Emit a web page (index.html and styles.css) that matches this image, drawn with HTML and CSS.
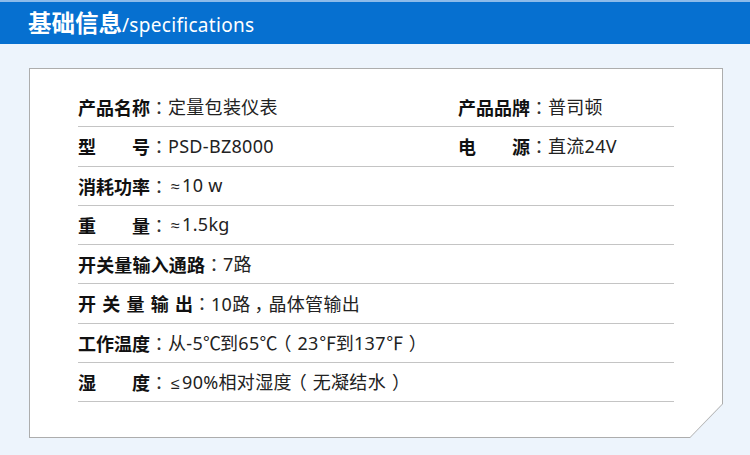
FILE: index.html
```html
<!DOCTYPE html>
<html lang="zh">
<head>
<meta charset="utf-8">
<link rel="stylesheet" href="styles.css">
</head>
<body>
<header class="banner">
  <h1 class="title"><span class="title-cn">基础信息</span><span class="title-en">/specifications</span></h1>
</header>
<main class="stage">
  <section class="card">
    <div class="card-inner">
      <div class="row">
        <div class="cell cell-left"><span class="label w4">产品名称</span><span class="colon">：</span><span class="value">定量包装仪表</span></div>
        <div class="cell"><span class="label w4">产品品牌</span><span class="colon">：</span><span class="value">普司顿</span></div>
      </div>
      <div class="row">
        <div class="cell cell-left"><span class="label w4">型号</span><span class="colon">：</span><span class="value">PSD-BZ8000</span></div>
        <div class="cell"><span class="label w4">电源</span><span class="colon">：</span><span class="value">直流24V</span></div>
      </div>
      <div class="row">
        <div class="cell"><span class="label w4">消耗功率</span><span class="colon">：</span><span class="value"><span class="sym">≈</span>10 w</span></div>
      </div>
      <div class="row">
        <div class="cell"><span class="label w4">重量</span><span class="colon">：</span><span class="value"><span class="sym">≈</span>1.5kg</span></div>
      </div>
      <div class="row">
        <div class="cell"><span class="label w7">开关量输入通路</span><span class="colon">：</span><span class="value">7路</span></div>
      </div>
      <div class="row">
        <div class="cell"><span class="label w5">开关量输出</span><span class="colon">：</span><span class="value">10路<span class="punct">，</span>晶体管输出</span></div>
      </div>
      <div class="row">
        <div class="cell"><span class="label w4">工作温度</span><span class="colon">：</span><span class="value">从-5<span class="deg">℃</span>到65<span class="deg">℃</span><span class="paren">（</span>23<span class="deg">℉</span>到137<span class="deg">℉</span><span class="paren">）</span></span></div>
      </div>
      <div class="row">
        <div class="cell"><span class="label w4">湿度</span><span class="colon">：</span><span class="value"><span class="sym">≤</span>90%相对湿度<span class="paren">（</span>无凝结水<span class="paren">）</span></span></div>
      </div>
    </div>
  </section>
</main>
</body>
</html>
```

FILE: styles.css
```css
* { box-sizing: border-box; margin: 0; padding: 0; }
html, body {
  width: 750px;
  height: 455px;
  overflow: hidden;
}
body {
  background: #edf4fc;
  font-family: "Noto Sans CJK SC", "Noto Sans", sans-serif;
  color: #222;
}
.banner {
  height: 44px;
  background: #0670d0;
  border-top: 2px solid #8cbbea;
  display: flex;
  align-items: center;
  padding-left: 28px;
}
.title {
  display: flex;
  align-items: baseline;
  color: #fff;
  line-height: 1;
}
.title-cn {
  font-size: 23.5px;
  font-weight: 700;
}
.title-en {
  font-family: "Noto Sans", "Open Sans", sans-serif;
  font-size: 19px;
  font-weight: 400;
  letter-spacing: 0.3px;
}
.stage {
  padding: 24px 0 0 29px;
}
.card {
  width: 694px;
  height: 370px;
  background: #adadad;
  padding: 1px;
  clip-path: polygon(0 0, 100% 0, 100% 336px, 661px 100%, 0 100%);
}
.card-inner {
  width: 100%;
  height: 100%;
  background: #fff;
  clip-path: polygon(0 0, 100% 0, 100% 335px, 660px 100%, 0 100%);
  padding: 19px 48px 0 48px;
}
.row {
  height: 39.25px;
  border-bottom: 1px solid #c4c4c4;
  display: flex;
  align-items: center;
  font-size: 18px;
  line-height: 1;
}
.cell {
  display: flex;
  align-items: center;
  white-space: nowrap;
}
.cell-left {
  width: 380px;
}
.label {
  display: inline-block;
  font-weight: 700;
  color: #111;
  text-align: justify;
  text-align-last: justify;
}
.w4 { width: 72px; }
.w5 { width: 115px; }
.w7 { width: 127px; }
.colon {
  font-family: "Noto Sans CJK TC", sans-serif;
  color: #333;
}
.value {
  font-family: "Noto Sans", "Noto Sans CJK SC", sans-serif;
  color: #222;
  letter-spacing: 0.3px;
}
.punct {
  font-family: "Noto Sans CJK SC", sans-serif;
  font-feature-settings: "halt";
  letter-spacing: 0;
  margin: 0 5px 0 4px;
}
.sym {
  font-family: "Liberation Sans", sans-serif;
  font-size: 16px;
  margin: 0 2px 0 3px;
}
.deg {
  font-family: "Noto Sans CJK SC", sans-serif;
  letter-spacing: -1px;
}
.paren {
  font-family: "Noto Sans CJK SC", sans-serif;
  font-feature-settings: "halt";
  letter-spacing: 0;
  margin: 0 6px;
}
```
